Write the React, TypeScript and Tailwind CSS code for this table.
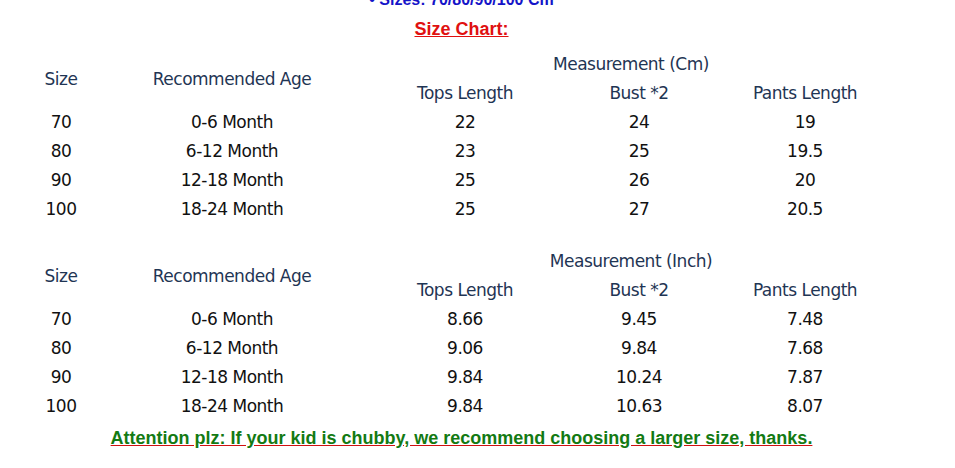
const rowsCm = [
  ['70', '0-6 Month', '22', '24', '19'],
  ['80', '6-12 Month', '23', '25', '19.5'],
  ['90', '12-18 Month', '25', '26', '20'],
  ['100', '18-24 Month', '25', '27', '20.5'],
];

const rowsInch = [
  ['70', '0-6 Month', '8.66', '9.45', '7.48'],
  ['80', '6-12 Month', '9.06', '9.84', '7.68'],
  ['90', '12-18 Month', '9.84', '10.24', '7.87'],
  ['100', '18-24 Month', '9.84', '10.63', '8.07'],
];

const cols = 'grid grid-cols-[122px_220px_246px_102px_230px]';

function SizeTable({ unit, rows }: { unit: string; rows: string[][] }) {
  return (
    <div className="font-['DejaVu_Sans',sans-serif] text-[17px] tracking-[-0.5px]">
      {/* header */}
      <div className={`${cols} text-[#1f3554] leading-[29px]`}>
        <div className="row-span-2 flex items-center justify-center">Size</div>
        <div className="row-span-2 flex items-center justify-center">Recommended Age</div>
        <div className="col-span-3 text-center">Measurement ({unit})</div>
        <div className="text-center">Tops Length</div>
        <div className="text-center">Bust *2</div>
        <div className="text-center">Pants Length</div>
      </div>
      {rows.map((r) => (
        <div key={r[0]} className={`${cols} text-[#111] leading-[29px]`}>
          {r.map((c, i) => (
            <div key={i} className="text-center">
              {c}
            </div>
          ))}
        </div>
      ))}
    </div>
  );
}

export default function App() {
  return (
    <div className="w-[955px] h-[468px] bg-white overflow-hidden">
      <div className="w-[923px] -mt-[9px] text-center font-['Liberation_Sans',Arial,sans-serif] font-bold text-[16px] text-[#1414c8] leading-[18px]">
        • Sizes: 70/80/90/100 Cm
      </div>
      <div className="w-[923px] mt-[8px] text-center font-['Liberation_Sans',Arial,sans-serif] font-bold text-[18px] text-[#e01010] underline leading-[24px]">
        Size Chart:
      </div>
      <div className="mt-[9px]">
        <SizeTable unit="Cm" rows={rowsCm} />
      </div>
      <div className="mt-[23px]">
        <SizeTable unit="Inch" rows={rowsInch} />
      </div>
      <div className="w-[923px] mt-[7px] text-center font-['Liberation_Sans',Arial,sans-serif] font-bold text-[18px] text-[#137a13] underline decoration-[#d01010] leading-[20px]">
        Attention plz: If your kid is chubby, we recommend choosing a larger size, thanks.
      </div>
    </div>
  );
}
